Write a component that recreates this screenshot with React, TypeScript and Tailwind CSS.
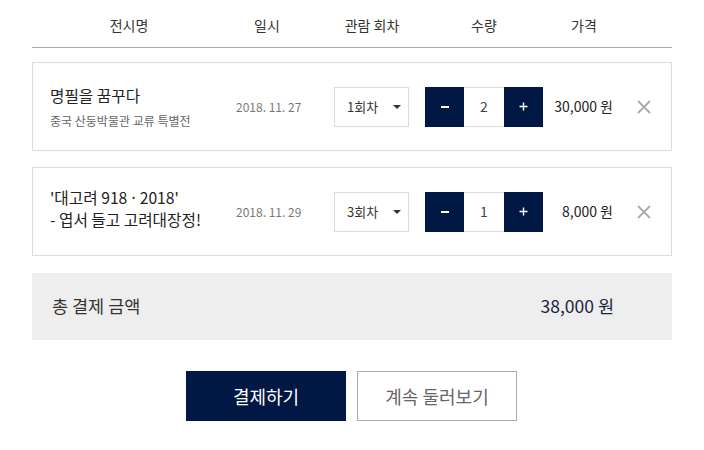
import React from "react";

const font = { fontFamily: '"Noto Sans CJK KR", "Noto Sans", sans-serif' };

function Row({
  title,
  sub,
  date,
  round,
  qty,
  price,
  shift,
}: {
  title: React.ReactNode;
  sub?: string;
  date: string;
  round: string;
  qty: number;
  price: string;
  shift?: boolean;
}) {
  return (
    <div className="flex h-[89px] items-center border border-[#dcdcdc]">
      <div className={shift ? "mb-[7px] w-[203px] pl-[17px]" : "w-[203px] pl-[17px]"}>
        <div className="text-[15.7px] leading-[21px] text-[#222]">{title}</div>
        {sub && <div className="mt-[6px] text-[12px] leading-[17px] text-[#666]">{sub}</div>}
      </div>
      <div className="w-[98px] text-[12px] text-[#777]">{date}</div>
      <div className="w-[91px]">
        <div className="flex h-[40px] w-[75px] items-center justify-between border border-[#dcdcdc] pl-[12px] pr-[7px] text-[13px] text-[#333]">
          <span>{round}</span>
          <span className="h-0 w-0 border-x-[4px] border-t-[4px] border-x-transparent border-t-[#333]" />
        </div>
      </div>
      <div className="flex h-[40px] w-[118px]">
        <button className="flex w-[39px] items-center justify-center bg-[#011744]">
          <span className="block h-[2px] w-[8px] bg-white" />
        </button>
        <div className="flex w-[40px] items-center justify-center border-y border-[#dcdcdc] text-[14px] text-[#444]">
          {qty}
        </div>
        <button className="flex w-[39px] items-center justify-center bg-[#011744] text-[15px] text-white">
          <svg width="9" height="9" viewBox="0 0 9 9">
            <path d="M4.5 0.5v8M0.5 4.5h8" stroke="white" strokeWidth="1.4" />
          </svg>
        </button>
      </div>
      <div className="w-[70px] text-right text-[14px] text-[#222]">{price}</div>
      <div className="flex flex-1 justify-center pl-[4px]">
        <svg width="14" height="14" viewBox="0 0 14 14">
          <path d="M1 1L13 13M13 1L1 13" stroke="#aaa" strokeWidth="1.8" />
        </svg>
      </div>
    </div>
  );
}

export default function App() {
  return (
    <div className="min-h-[450px] bg-white" style={font}>
      <div className="mx-auto w-[640px]">
        <div className="flex h-[48px] items-center border-b border-[#aaa] pt-[4px] text-[14px] text-[#333]">
          <div className="w-[194px] text-center">전시명</div>
          <div className="w-[82px] text-center">일시</div>
          <div className="w-[128px] text-center">관람 회차</div>
          <div className="w-[96px] text-center">수량</div>
          <div className="w-[104px] text-center">가격</div>
        </div>
        <div className="mt-[14px] flex flex-col gap-[16px]">
          <Row
            title="명필을 꿈꾸다"
            sub="중국 산둥박물관 교류 특별전"
            date="2018. 11. 27"
            round="1회차"
            qty={2}
            price="30,000 원"
          />
          <Row
            shift
            title={
              <>
                '대고려 918
                <span style={{ fontFamily: '"Noto Sans", sans-serif' }}> · </span>
                2018'
                <br />- 엽서 들고 고려대장정!
              </>
            }
            date="2018. 11. 29"
            round="3회차"
            qty={1}
            price="8,000 원"
          />
        </div>
        <div className="mt-[17px] flex h-[67px] items-center bg-[#eeeeee] pl-[20px]">
          <div className="w-[421px] text-[17.5px] text-[#333]">총 결제 금액</div>
          <div className="w-[141px] text-right text-[17.5px] text-[#1b2541]">38,000 원</div>
        </div>
        <div className="mt-[31px] flex gap-[11px] pl-[154px]">
          <button className="h-[50px] w-[160px] bg-[#011744] text-[18px] text-white">결제하기</button>
          <button className="h-[50px] w-[160px] border border-[#aaa] bg-white text-[18px] text-[#666]">
            계속 둘러보기
          </button>
        </div>
      </div>
    </div>
  );
}
